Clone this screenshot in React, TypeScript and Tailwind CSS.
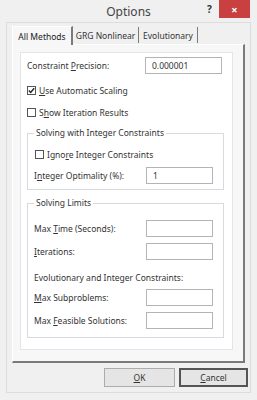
import React from 'react';

const font = { fontFamily: '"Noto Sans", "Open Sans", sans-serif' };

function U({ children }: { children: React.ReactNode }) {
  return <span className="underline underline-offset-1">{children}</span>;
}

function Box({ value }: { value?: string }) {
  return (
    <div className="w-[67px] h-[17px] bg-white border border-[#b4b4b4] flex items-center px-[6px] text-[#333]">
      {value}
    </div>
  );
}

function Check({ checked, children }: { checked?: boolean; children: React.ReactNode }) {
  return (
    <div className="flex items-center gap-[3px] h-[13px]">
      <div className="w-[9px] h-[9px] border border-[#555] bg-white flex items-center justify-center">
        {checked && (
          <svg width="7" height="7" viewBox="0 0 7 7">
            <path d="M0.8 3.5 L2.7 5.4 L6.2 1.2" stroke="#222" strokeWidth="1.4" fill="none" />
          </svg>
        )}
      </div>
      <span>{children}</span>
    </div>
  );
}

function Row({ label, value, className }: { label: React.ReactNode; value?: string; className?: string }) {
  return (
    <div className={`flex items-center justify-between ${className ?? ''}`}>
      <span>{label}</span>
      <Box value={value} />
    </div>
  );
}

function Group({ title, children, className }: { title: string; children: React.ReactNode; className?: string }) {
  return (
    <div className={`relative border border-[#d6dbe0] ml-[6px] w-[197px] ${className ?? ''}`}>
      <span className="absolute -top-[7px] left-[6px] bg-white px-[2px] leading-[12px]">{title}</span>
      {children}
    </div>
  );
}

export default function App() {
  return (
    <div className="w-[257px] h-[400px] bg-[#f0f0f0] text-[8.5px] leading-[13px] text-[#333] relative" style={font}>
      {/* Title bar */}
      <div className="h-[22px] flex items-center relative">
        <span className="absolute left-0 right-0 text-center text-[12px] leading-[16px] text-[#444] top-[4px]">Options</span>
        <span className="absolute left-[207px] top-[3px] text-[10px] font-bold text-[#333]">?</span>
        <div className="absolute left-[219px] top-0 w-[31px] h-[18px] bg-[#c94040] flex items-center justify-center text-white text-[11px] font-bold">
          ×
        </div>
      </div>

      {/* Client */}
      <div className="mx-[6px] h-[371px] border border-[#dcdcdc] bg-[#f0f0f0] pl-[5px] pt-[3px]">
        {/* Tabs */}
        <div className="flex h-[18px] items-end">
          <div className="h-[19px] w-[61px] bg-[#f7f7f7] border-t border-l border-white border-r-2 border-r-[#7a7a7a] flex items-center justify-center text-[#222] relative z-10 -mb-px">
            All Methods
          </div>
          <div className="h-[16px] w-[66px] border-r border-r-[#7a7a7a] flex items-center justify-center mb-[1px]">GRG Nonlinear</div>
          <div className="h-[16px] w-[59px] border-r border-r-[#7a7a7a] flex items-center justify-center mb-[1px]">Evolutionary</div>
        </div>

        {/* Panel */}
        <div className="w-[233px] h-[319px] bg-[#f7f7f7] border-t border-l border-white border-r-2 border-b-2 border-r-[#7a7a7a] border-b-[#7a7a7a] pl-[7px] pt-[7px]">
          <div className="w-[213px] h-[298px] bg-white border border-[#e2e6ea]">
            <div className="pl-[6px] pr-[10px] pt-[4px]">
              <div className="flex items-center justify-between">
                <span>
                  Constraint <U>P</U>recision:
                </span>
                <div className="w-[77px] h-[17px] bg-white border border-[#b4b4b4] flex items-center px-[6px]">0.000001</div>
              </div>
              <div className="mt-[10px]">
                <Check checked>
                  <U>U</U>se Automatic Scaling
                </Check>
              </div>
              <div className="mt-[9px]">
                <Check>
                  S<U>h</U>ow Iteration Results
                </Check>
              </div>
            </div>

            <Group title="Solving with Integer Constraints" className="mt-[14px] h-[57px]">
              <div className="pl-[7px] pt-[14px]">
                <Check>
                  Igno<U>r</U>e Integer Constraints
                </Check>
              </div>
              <Row
                className="pl-[6px] pr-[10px] mt-[6px]"
                label={
                  <>
                    I<U>n</U>teger Optimality (%):
                  </>
                }
                value="1"
              />
            </Group>

            <Group title="Solving Limits" className="mt-[13px] h-[135px]">
              <div className="pl-[6px] pr-[10px] pt-[16px] flex flex-col">
                <Row
                  label={
                    <>
                      Max <U>T</U>ime (Seconds):
                    </>
                  }
                />
                <Row
                  className="mt-[6px]"
                  label={
                    <>
                      <U>I</U>terations:
                    </>
                  }
                />
                <div className="mt-[12px] h-[12px] leading-[12px]">Evolutionary and Integer Constraints:</div>
                <Row
                  className="mt-[5px]"
                  label={
                    <>
                      <U>M</U>ax Subproblems:
                    </>
                  }
                />
                <Row
                  className="mt-[6px]"
                  label={
                    <>
                      Max <U>F</U>easible Solutions:
                    </>
                  }
                />
              </div>
            </Group>
          </div>
        </div>

        {/* Buttons */}
        <div className="flex justify-end gap-[4px] pr-[2px] mt-[5px]">
          <div className="w-[71px] h-[19px] bg-[#e5e5e5] border border-[#acacac] flex items-center justify-center">
            <U>O</U>K
          </div>
          <div className="w-[69px] h-[19px] bg-[#e5e5e5] border-2 border-[#555] flex items-center justify-center">
            <span>
              <U>C</U>ancel
            </span>
          </div>
        </div>
      </div>
    </div>
  );
}
